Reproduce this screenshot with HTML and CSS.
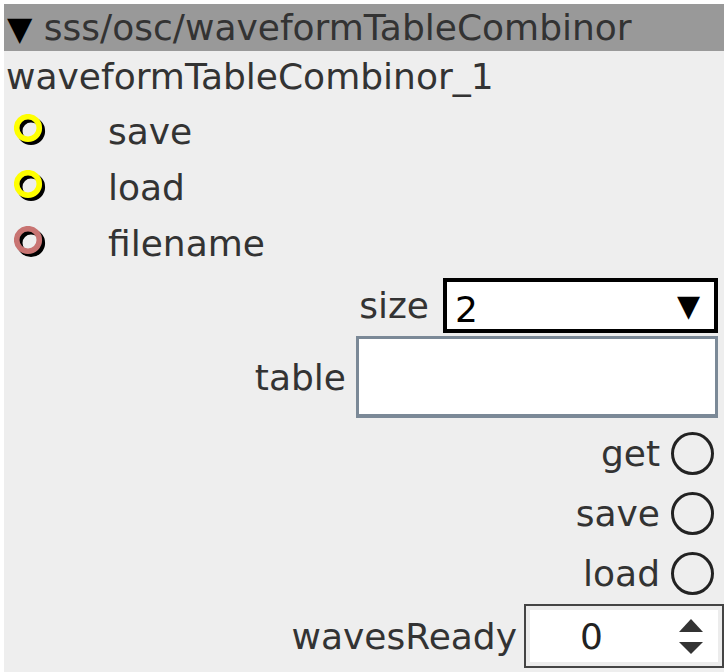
FILE: index.html
```html
<!DOCTYPE html>
<html>
<head>
<meta charset="utf-8">
<link rel="stylesheet" href="styles.css">
</head>
<body>
<div class="panel">
  <div class="header"><span class="tri">▼</span> sss/osc/waveformTableCombinor</div>
  <div class="name">waveformTableCombinor_1</div>
  <div class="inlets">
    <div class="inlet">
      <svg class="port" width="40" height="40" viewBox="0 0 40 40"><circle cx="17" cy="17" r="11.3" fill="none" stroke="#000" stroke-width="5.6"/><circle cx="14" cy="14" r="11.3" fill="none" stroke="#ffff00" stroke-width="5.6"/></svg>
      <span class="inlet-label">save</span>
    </div>
    <div class="inlet">
      <svg class="port" width="40" height="40" viewBox="0 0 40 40"><circle cx="17" cy="17" r="11.3" fill="none" stroke="#000" stroke-width="5.6"/><circle cx="14" cy="14" r="11.3" fill="none" stroke="#ffff00" stroke-width="5.6"/></svg>
      <span class="inlet-label">load</span>
    </div>
    <div class="inlet">
      <svg class="port" width="40" height="40" viewBox="0 0 40 40"><circle cx="17" cy="17" r="11.3" fill="none" stroke="#000" stroke-width="5.6"/><circle cx="14" cy="14" r="11.3" fill="none" stroke="#c87472" stroke-width="5.6"/></svg>
      <span class="inlet-label">filename</span>
    </div>
  </div>
  <div class="row row-size">
    <span class="label">size</span>
    <div class="select"><span class="sel-val">2</span><span class="sel-arrow">▼</span></div>
  </div>
  <div class="row row-table">
    <span class="label">table</span>
    <div class="textbox"></div>
  </div>
  <div class="row row-radio">
    <span class="label">get</span>
    <span class="radio"></span>
  </div>
  <div class="row row-radio">
    <span class="label">save</span>
    <span class="radio"></span>
  </div>
  <div class="row row-radio">
    <span class="label">load</span>
    <span class="radio"></span>
  </div>
  <div class="row row-num">
    <span class="label">wavesReady</span>
    <div class="number">
      <span class="num-val">0</span>
      <svg class="spin" width="26" height="38" viewBox="0 0 26 38"><polygon points="13,2 25,15 1,15" fill="#333"/><polygon points="1,25 25,25 13,37" fill="#333"/></svg>
    </div>
  </div>
</div>
</body>
</html>
```

FILE: styles.css
```css
html, body {
  margin: 0;
  padding: 0;
  background: #fff;
}
body {
  font-family: "DejaVu Sans", sans-serif;
  color: #333;
}
.panel {
  margin: 4px;
  width: 720px;
  height: 668px;
  background: #eeeeee;
  font-size: 36px;
  overflow: hidden;
}
.header {
  height: 47px;
  line-height: 47px;
  background: #999999;
  padding-left: 3px;
  white-space: nowrap;
}
.tri {
  color: #000;
  font-size: 33px;
}
.name {
  height: 52px;
  line-height: 52px;
  padding-left: 2px;
}
.inlets {
  display: flex;
  flex-direction: column;
}
.inlet {
  height: 56px;
  display: flex;
  align-items: center;
}
.port {
  margin-left: 10px;
  margin-top: 6px;
  flex: none;
}
.inlet-label {
  margin-left: 54px;
}
.row {
  display: flex;
  justify-content: flex-end;
  align-items: center;
  gap: 14px;
}
.row-size {
  margin-top: 7px;
  height: 55px;
  padding-right: 6px;
}
.select {
  width: 275px;
  height: 55px;
  box-sizing: border-box;
  border: 4px solid #000;
  background: #fff;
  display: flex;
  align-items: center;
  justify-content: space-between;
  padding: 0 14px 0 8px;
  color: #000;
}
.sel-val {
  padding-top: 8px;
}
.sel-arrow {
  font-size: 30px;
}
.row-table {
  margin-top: 3px;
  height: 82px;
  padding-right: 6px;
  gap: 10px;
}
.textbox {
  width: 362px;
  height: 82px;
  box-sizing: border-box;
  background: #fff;
  border: 3px solid #7b8997;
  border-bottom-width: 4px;
}
.row-radio {
  height: 60px;
  padding-right: 10px;
  gap: 11px;
}
.row-table + .row-radio {
  margin-top: 5px;
}
.radio {
  width: 43px;
  height: 43px;
  box-sizing: border-box;
  border: 3.5px solid #222;
  border-radius: 50%;
  background: #eee;
}
.row-num {
  margin-top: 1px;
  height: 64px;
  gap: 7px;
}
.number {
  width: 200px;
  height: 64px;
  box-sizing: border-box;
  border: 2px solid #444;
  background: #fff;
  box-shadow: inset 0 0 0 4px #ececec;
  display: flex;
  align-items: center;
  justify-content: space-between;
  padding: 0 18px 0 54px;
}
.num-val {
  color: #222;
}
.spin {
  flex: none;
}
```
